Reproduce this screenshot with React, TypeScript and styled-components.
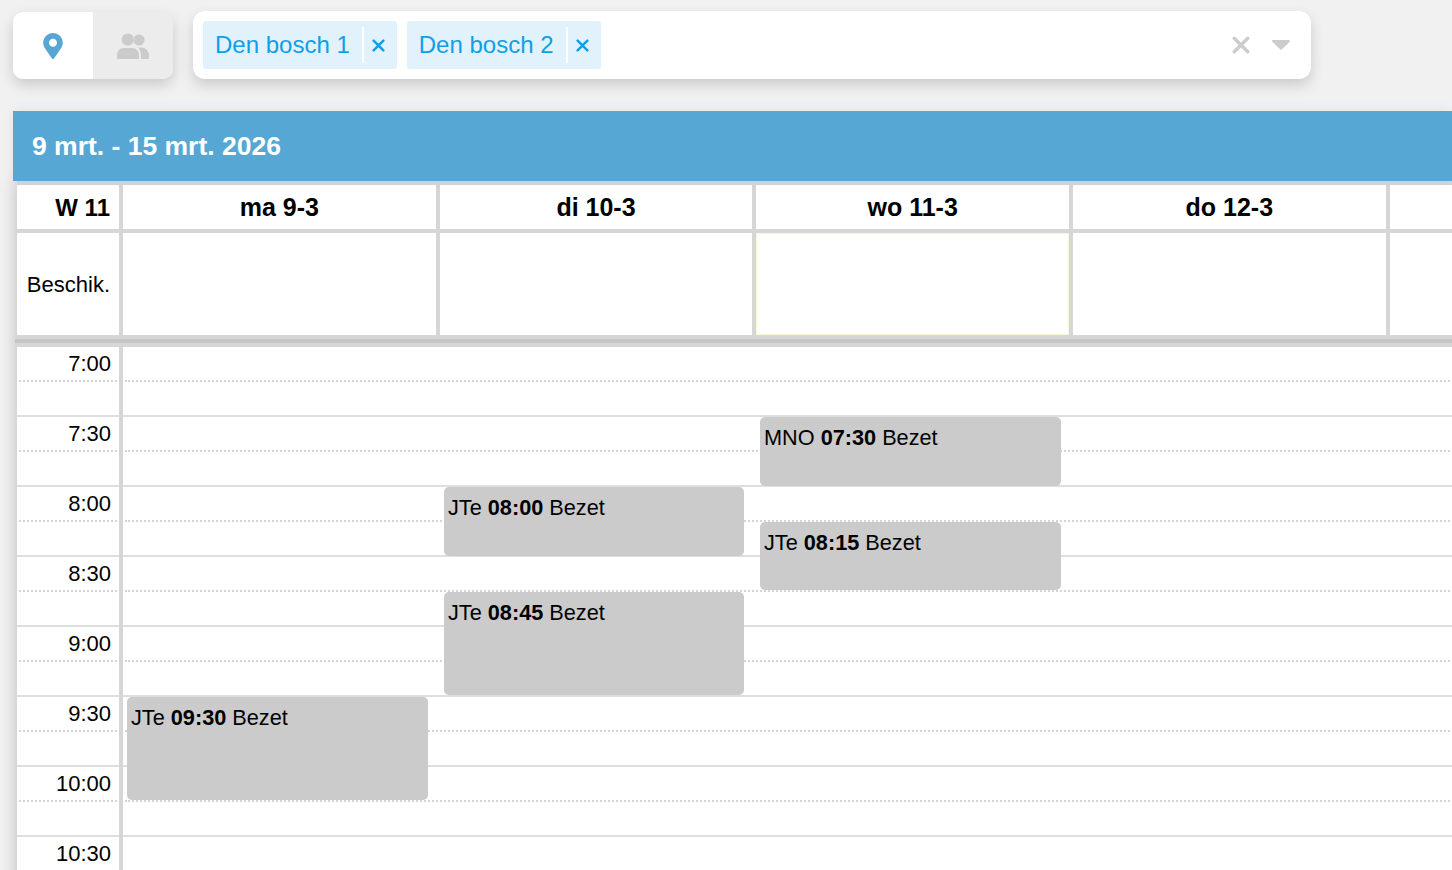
import React from 'react';
import styled, { createGlobalStyle } from 'styled-components';
import { FaMapMarkerAlt } from 'react-icons/fa';

const GlobalStyle = createGlobalStyle`
  html, body {
    margin: 0;
    height: 100%;
    overflow: hidden;
    background: #f1f1f1;
    font-family: "Liberation Sans", Arial, sans-serif;
    color: #000;
  }
`;

const Page = styled.div`
  width: 1452px;
  height: 870px;
  overflow: hidden;
  box-sizing: border-box;
  padding: 11px 0 0 13px;
`;

const Toolbar = styled.div`
  display: flex;
  gap: 20px;
  height: 68px;
  margin-bottom: 32px;
  width: 1298px;
`;

const ModeSwitch = styled.div`
  width: 160px;
  height: 67px;
  margin-top: 1px;
  display: flex;
  border-radius: 10px;
  overflow: hidden;
  box-shadow: 0 6px 14px rgba(0, 0, 0, 0.16);
`;

const ModeButton = styled.div<{ $active?: boolean }>`
  flex: 1;
  display: flex;
  align-items: center;
  justify-content: center;
  font-size: 26px;
  background: ${p => (p.$active ? '#fff' : '#ececec')};
  color: ${p => (p.$active ? '#56a7d4' : '#cbcbcb')};
`;

const SelectBox = styled.div`
  flex: 1;
  display: flex;
  align-items: center;
  background: #fff;
  border-radius: 12px;
  padding: 0 20px 0 10px;
  box-shadow: 0 6px 14px rgba(0, 0, 0, 0.16);
`;

const Chips = styled.div`
  flex: 1;
  display: flex;
  gap: 10px;
`;

const Chip = styled.div`
  height: 48px;
  display: flex;
  align-items: center;
  background: #e1f2fd;
  border-radius: 3px;
  color: #0e9fe6;
  font-size: 24px;
  padding-left: 12px;
`;

const ChipLabel = styled.span`
  padding-right: 12px;
`;

const ChipRemove = styled.span`
  width: 35px;
  height: 36px;
  display: flex;
  align-items: center;
  justify-content: center;
  border-left: 2px solid #fff;
  padding-right: 3px;
  box-sizing: border-box;
`;

const SelectActions = styled.div`
  display: flex;
  align-items: center;
  gap: 21px;
`;

const Panel = styled.div`
  width: 1439px;
`;

const WeekTitle = styled.div`
  position: relative;
  z-index: 1;
  height: 70px;
  background: #56a7d4;
  color: #fff;
  font-size: 26.5px;
  font-weight: 700;
  line-height: 70px;
  padding-left: 19px;
  box-shadow: 0 0 14px rgba(0, 0, 0, 0.06);
`;

const Board = styled.div`
  margin-left: 4px;
  box-shadow: 0 0 16px rgba(0, 0, 0, 0.24);
`;

const DayGrid = styled.div`
  display: grid;
  grid-template-columns: 102px repeat(5, 312.67px);
  grid-template-rows: 44px 102px;
  gap: 4px;
  padding: 4px 0;
  background: #d6d6d6;
`;

const Cell = styled.div<{ $today?: boolean }>`
  background: #fff;
  box-sizing: border-box;
  display: flex;
  align-items: center;
  justify-content: center;
  ${p => p.$today && 'border: 1px solid #fbf5dc;'}
`;

const WeekCell = styled(Cell)`
  justify-content: flex-end;
  padding: 1px 9px 0 0;
  font-size: 24px;
  font-weight: 700;
`;

const DayHead = styled(Cell)`
  padding-top: 1px;
  font-size: 25px;
  font-weight: 700;
`;

const RowLabel = styled(Cell)`
  justify-content: flex-end;
  padding: 2px 9px 0 0;
  font-size: 22px;
`;

const Divider = styled.div<{ $dark?: boolean }>`
  height: 4px;
  margin-left: -2px;
  background: ${p => (p.$dark ? '#c6c6c6' : '#d6d6d6')};
`;

const Schedule = styled.div`
  position: relative;
  background: #fff;
  display: grid;
  grid-template-columns: 102px 1fr;
  column-gap: 4px;
  height: 560px;
  overflow: hidden;
`;

const TimeColumn = styled.div`
  box-shadow: 4px 0 0 #d6d6d6;
`;

const SlotColumn = styled.div``;

const Slot = styled.div`
  height: 70px;
  box-sizing: border-box;
  border-bottom: 2px solid #dedede;
  position: relative;
`;

const TimeSlot = styled(Slot)`
  text-align: right;
  padding: 4px 8px 0 0;
  font-size: 22px;
  line-height: 25px;
`;

const HalfLine = styled.div`
  position: absolute;
  left: 2px;
  right: 2px;
  top: 33px;
  border-top: 2px dotted #d4d4d4;
`;

const EventBlock = styled.div`
  position: absolute;
  box-sizing: border-box;
  background: #cbcbcb;
  border-radius: 5px;
  font-size: 21.7px;
  line-height: 25px;
  padding: 8px 4px 0;
`;

const times = ['7:00', '7:30', '8:00', '8:30', '9:00', '9:30', '10:00', '10:30'];
const days = ['ma 9-3', 'di 10-3', 'wo 11-3', 'do 12-3', ''];

const events = [
  { who: 'JTe', time: '09:30', left: 110, top: 350, width: 301, height: 103 },
  { who: 'JTe', time: '08:00', left: 427, top: 140, width: 300, height: 69 },
  { who: 'JTe', time: '08:45', left: 427, top: 245, width: 300, height: 103 },
  { who: 'MNO', time: '07:30', left: 743, top: 70, width: 301, height: 69 },
  { who: 'JTe', time: '08:15', left: 743, top: 175, width: 301, height: 68 },
];

const RemoveIcon: React.FC<{ size: number; color: string; weight: number }> = ({ size, color, weight }) => (
  <svg width={size} height={size} viewBox="0 0 16 16">
    <path d="M2 2 L14 14 M14 2 L2 14" stroke={color} strokeWidth={weight} strokeLinecap="round" fill="none" />
  </svg>
);

const PeopleIcon: React.FC = () => (
  <svg width="32" height="26" viewBox="0 0 32 26" fill="#cbcbcb">
    <circle cx="22" cy="7" r="5.6" />
    <path d="M21 14.5 H24 C28.5 14.5 32 18 32 22.5 V26 H24 V22 C24 19 23 16.5 21 14.5 Z" />
    <circle cx="10.8" cy="6.6" r="6.6" fill="#ececec" />
    <circle cx="10.8" cy="6.6" r="6.1" />
    <path d="M0 26 V22 C0 18 3 15 7 15 H15 C19 15 22 18 22 22 V26 Z" />
  </svg>
);

const App: React.FC = () => {
  return (
    <Page>
      <GlobalStyle />
      <Toolbar>
        <ModeSwitch>
          <ModeButton $active><FaMapMarkerAlt /></ModeButton>
          <ModeButton><PeopleIcon /></ModeButton>
        </ModeSwitch>
        <SelectBox>
          <Chips>
            <Chip>
              <ChipLabel>Den bosch 1</ChipLabel>
              <ChipRemove><RemoveIcon size={13} color="#0e9fe6" weight={3} /></ChipRemove>
            </Chip>
            <Chip>
              <ChipLabel>Den bosch 2</ChipLabel>
              <ChipRemove><RemoveIcon size={13} color="#0e9fe6" weight={3} /></ChipRemove>
            </Chip>
          </Chips>
          <SelectActions>
            <RemoveIcon size={18} color="#cccccc" weight={3} />
            <svg width="20" height="12" viewBox="0 0 20 12">
              <path d="M2 1 H18 a1 1 0 0 1 .7 1.7 L10.7 10.6 a1 1 0 0 1 -1.4 0 L1.3 2.7 A1 1 0 0 1 2 1 Z" fill="#cccccc" />
            </svg>
          </SelectActions>
        </SelectBox>
      </Toolbar>
      <Panel>
        <WeekTitle>9 mrt. - 15 mrt. 2026</WeekTitle>
        <Board>
          <DayGrid>
            <WeekCell>W 11</WeekCell>
            {days.map((d, i) => <DayHead key={i}>{d}</DayHead>)}
            <RowLabel>Beschik.</RowLabel>
            {days.map((d, i) => <Cell key={i} $today={i === 2} />)}
          </DayGrid>
          <Divider $dark />
          <Divider />
          <Schedule>
            <TimeColumn>
              {times.map(t => (
                <TimeSlot key={t}>{t}<HalfLine /></TimeSlot>
              ))}
            </TimeColumn>
            <SlotColumn>
              {times.map(t => (
                <Slot key={t}><HalfLine /></Slot>
              ))}
            </SlotColumn>
            {events.map(e => (
              <EventBlock key={e.time} style={{ left: e.left, top: e.top, width: e.width, height: e.height }}>
                {e.who} <b>{e.time}</b> Bezet
              </EventBlock>
            ))}
          </Schedule>
        </Board>
      </Panel>
    </Page>
  );
};

export default App;
